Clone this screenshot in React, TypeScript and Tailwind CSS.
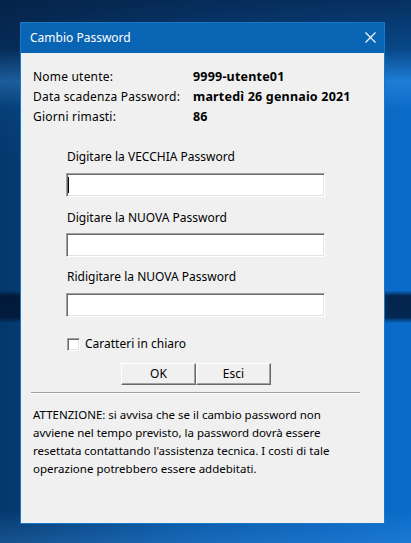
const font = "font-['Segoe_UI','Noto_Sans','Open_Sans',sans-serif]";

function Field({ label, mt, imt, caret }: { label: string; mt: string; imt: string; caret?: boolean }) {
  return (
    <>
      <div className={`${mt} h-[20px] leading-[20px] pl-[1px]`}>{label}</div>
      <div
        className={`${imt} relative h-[24px] w-[259px] bg-white border border-t-[#a0a0a0] border-l-[#a0a0a0] border-b-white border-r-white shadow-[inset_1px_1px_0_#696969,inset_-1px_-1px_0_#e3e3e3]`}
      >
        {caret && <div className="absolute left-[1px] top-[3px] h-[16px] w-[1px] bg-black" />}
      </div>
    </>
  );
}

function Btn({ children }: { children: string }) {
  return (
    <div className="h-[22px] w-[75px] flex items-center justify-center bg-[#f0f0f0] border border-t-white border-l-white border-b-[#696969] border-r-[#696969] shadow-[inset_-1px_-1px_0_#a0a0a0]">
      {children}
    </div>
  );
}

export default function App() {
  return (
    <div
      className={`w-[411px] h-[543px] overflow-hidden pt-[22px] pl-[20px] ${font} text-[12px] text-black bg-[linear-gradient(180deg,rgba(6,28,60,0.75)_0%,rgba(6,28,60,0.45)_9%,rgba(70,160,240,0.35)_15%,rgba(30,110,200,0.1)_20%,transparent_30%,transparent_53.5%,rgba(2,18,45,0.8)_54.5%,rgba(2,18,45,0.75)_58.5%,transparent_59.5%,transparent_94%,rgba(80,160,240,0.25)_100%),linear-gradient(90deg,#04386c_0%,#0756a4_45%,#0a6cca_100%)]`}
    >
      <div className="w-[365px] h-[502px] border border-[#1a78c8] bg-[#f0f0f0] flex flex-col">
        <div className="h-[30px] bg-[#0a64b4] text-white flex items-center justify-between pl-[9px] pr-[8px]">
          <span className="leading-[30px] -mt-[1px]">Cambio Password</span>
          <svg width="11" height="11" viewBox="0 0 11 11" className="-mt-[1px]">
            <path d="M0.5 0.5 L10.5 10.5 M10.5 0.5 L0.5 10.5" stroke="white" strokeWidth="1.1" fill="none" />
          </svg>
        </div>

        <div className="pt-[14px] pl-[12px] grid grid-cols-[160px_1fr] auto-rows-[20px] leading-[20px]">
          <div className="tracking-[0.2px]">Nome utente:</div>
          <div className="font-bold text-[12.5px] tracking-[0.2px]">9999-utente01</div>
          <div className="tracking-[0.2px]">Data scadenza Password:</div>
          <div className="font-bold text-[12.5px] tracking-[0.2px]">martedì 26 gennaio 2021</div>
          <div className="tracking-[0.2px]">Giorni rimasti:</div>
          <div className="font-bold text-[12.5px] tracking-[0.2px]">86</div>
        </div>

        <div className="pl-[45px]">
          <Field label="Digitare la VECCHIA Password" mt="mt-[20px]" imt="mt-[6px]" caret />
          <Field label="Digitare la NUOVA Password" mt="mt-[11px]" imt="mt-[5px]" />
          <Field label="Ridigitare la NUOVA Password" mt="mt-[10px]" imt="mt-[6px]" />
          <div className="mt-[17px] h-[20px] flex items-center gap-[5px] pl-[1px]">
            <div className="w-[13px] h-[13px] bg-white border border-t-[#a0a0a0] border-l-[#a0a0a0] border-b-white border-r-white shadow-[inset_1px_1px_0_#696969,inset_-1px_-1px_0_#e3e3e3]" />
            <span>Caratteri in chiaro</span>
          </div>
        </div>

        <div className="mt-[9px] pl-[100px] flex">
          <Btn>OK</Btn>
          <Btn>Esci</Btn>
        </div>

        <div className="mt-[7px] ml-[10px] w-[329px] h-[2px] border-t border-t-[#a0a0a0] border-b border-b-white" />

        <div className="mt-[12px] pl-[12px] leading-[18px] text-[11.5px]">
          <div>ATTENZIONE: si avvisa che se il cambio password non</div>
          <div>avviene nel tempo previsto, la password dovrà essere</div>
          <div>resettata contattando l'assistenza tecnica. I costi di tale</div>
          <div>operazione potrebbero essere addebitati.</div>
        </div>
      </div>
    </div>
  );
}
